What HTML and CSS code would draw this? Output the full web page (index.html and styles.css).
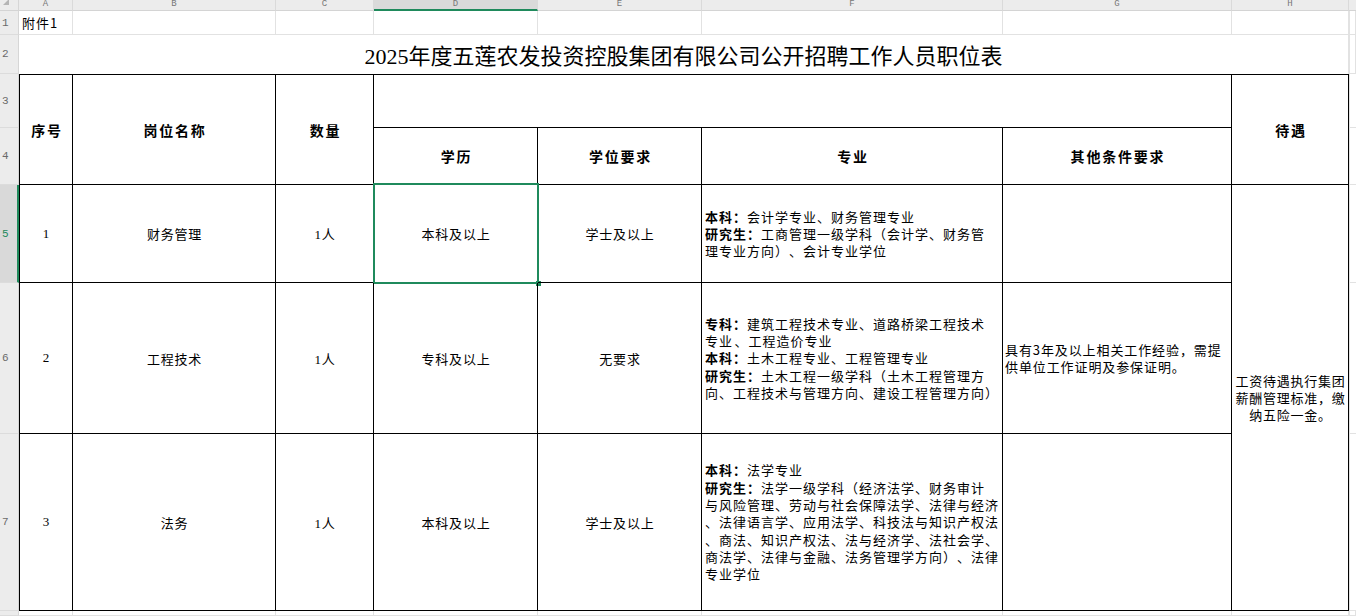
FILE: index.html
```html
<!DOCTYPE html>
<html lang="zh-CN">
<head>
<meta charset="utf-8">
<title>职位表</title>
<link rel="stylesheet" href="styles.css">
</head>
<body>
<div class="sheet">
  <!-- column headers -->
  <div class="corner"><svg class="tri" width="8" height="6" viewBox="0 0 8 6"><polygon points="8,0 8,6 2,6" fill="#b5b5b5"/></svg></div>
  <div class="ch"><span>A</span></div>
  <div class="ch"><span>B</span></div>
  <div class="ch"><span>C</span></div>
  <div class="ch ch-sel"><span>D</span></div>
  <div class="ch"><span>E</span></div>
  <div class="ch"><span>F</span></div>
  <div class="ch"><span>G</span></div>
  <div class="ch"><span>H</span></div>
  <div class="ch ch-last"></div>

  <!-- row 1 -->
  <div class="rh">1</div>
  <div class="g txt-left">附件1</div>
  <div class="g"></div>
  <div class="g"></div>
  <div class="g"></div>
  <div class="g"></div>
  <div class="g"></div>
  <div class="g"></div>
  <div class="g"></div>
  <div class="g gi"></div>

  <!-- row 2 -->
  <div class="rh">2</div>
  <div class="title span-c8">2025年度五莲农发投资控股集团有限公司公开招聘工作人员职位表</div>
  <div class="g gi"></div>

  <!-- row 3 -->
  <div class="rh">3</div>
  <div class="t top first hd span-r2">序号</div>
  <div class="t top hd span-r2">岗位名称</div>
  <div class="t top hd span-r2">数量</div>
  <div class="t top span-c4"></div>
  <div class="t top hd span-r2">待遇</div>
  <div class="gi"></div>

  <!-- row 4 -->
  <div class="rh">4</div>
  <div class="t hd">学历</div>
  <div class="t hd">学位要求</div>
  <div class="t hd">专业</div>
  <div class="t hd">其他条件要求</div>
  <div class="gi"></div>

  <!-- row 5 -->
  <div class="rh rh-sel">5</div>
  <div class="t first dt num">1</div>
  <div class="t dt">财务管理</div>
  <div class="t dt num">1人</div>
  <div class="t dt cell-sel">本科及以上<div class="sel"><div class="handle"></div></div></div>
  <div class="t dt">学士及以上</div>
  <div class="t dt para"><p><b>本科：</b>会计学专业、财务管理专业<br><b>研究生：</b>工商管理一级学科（会计学、财务管<br>理专业方向）、会计专业学位</p></div>
  <div class="t dt"></div>
  <div class="t dt span-r3"><p class="center-p">工资待遇执行集团<br>薪酬管理标准，缴<br>纳五险一金。</p></div>
  <div class="gi"></div>

  <!-- row 6 -->
  <div class="rh">6</div>
  <div class="t first dt num">2</div>
  <div class="t dt">工程技术</div>
  <div class="t dt num">1人</div>
  <div class="t dt">专科及以上</div>
  <div class="t dt">无要求</div>
  <div class="t dt para"><p><b>专科：</b>建筑工程技术专业、道路桥梁工程技术<br>专业<span class="thin"> </span>、工程造价专业<br><b>本科：</b>土木工程专业、工程管理专业<br><b>研究生：</b>土木工程一级学科（土木工程管理方<br>向、工程技术与管理方向、建设工程管理方向）</p></div>
  <div class="t dt para para-g"><p>具有3年及以上相关工作经验，需提<br>供单位工作证明及参保证明。</p></div>
  <div class="gi"></div>

  <!-- row 7 -->
  <div class="rh">7</div>
  <div class="t first dt num">3</div>
  <div class="t dt">法务</div>
  <div class="t dt num">1人</div>
  <div class="t dt">本科及以上</div>
  <div class="t dt">学士及以上</div>
  <div class="t dt para"><p><b>本科：</b>法学专业<br><b>研究生：</b>法学一级学科（经济法学、财务审计<br>与风险管理、劳动与社会保障法学、法律与经济<br>、法律语言学、应用法学、科技法与知识产权法<br>、商法、知识产权法、法与经济学、法社会学、<br>商法学、法律与金融、法务管理学方向）、法律<br>专业学位</p></div>
  <div class="t dt"></div>
  <div class="gi"></div>

  <!-- row 8 -->
  <div class="rh"></div>
  <div class="g"></div>
  <div class="g"></div>
  <div class="g"></div>
  <div class="g"></div>
  <div class="g"></div>
  <div class="g"></div>
  <div class="g"></div>
  <div class="g"></div>
  <div class="g gi"></div>
</div>
</body>
</html>
```

FILE: styles.css
```css
* { box-sizing: border-box; }

html, body {
  margin: 0;
  padding: 0;
  background: #fff;
}

body {
  font-family: "Noto Sans CJK SC", "Noto Sans", sans-serif;
  color: #000;
  text-spacing-trim: space-all;
}

.sheet {
  display: grid;
  grid-template-columns: 19px 54px 203px 98px 164px 164px 301px 229px 117px 1fr;
  grid-template-rows: 11px 24px 39px 54px 57px 98px 151px 177px 1fr;
  width: 1356px;
  height: 616px;
  overflow: hidden;
}

/* ---------- headers ---------- */
.corner {
  background: #ececec;
  border-right: 1px solid #d6d6d6;
  border-bottom: 1px solid #d4d4d4;
  display: flex;
  align-items: flex-start;
  padding-left: 1px;
}
.tri { display: block; margin-top: -1px; }

.ch {
  background: #ececec;
  border-right: 1px solid #dadada;
  border-bottom: 1px solid #d4d4d4;
  text-align: center;
}
.ch span {
  display: block;
  font-family: "Liberation Mono", "DejaVu Sans Mono", monospace;
  font-size: 9px;
  line-height: 9px;
  color: #777;
}
.ch-sel {
  background: #dadada;
  border-bottom: 2px solid #1f8a5c;
}
.ch-last { border-right: none; }

.rh {
  background: #ececec;
  border-right: 1px solid #d6d6d6;
  border-bottom: 1px solid #dcdcdc;
  font-family: "Liberation Mono", "DejaVu Sans Mono", monospace;
  font-size: 11px;
  color: #6a6a6a;
  display: flex;
  align-items: center;
  padding-left: 2px;
}
.rh-sel {
  background: #d9d9d9;
  color: #1f8a5c;
  border-right: 2px solid #1f8a5c;
}

/* ---------- grid cells ---------- */
.g {
  border-right: 1px solid #e2e2e2;
  border-bottom: 1px solid #e2e2e2;
}
.gi {
  border-left: 1px solid #e2e2e2;
  border-bottom: 1px solid #e2e2e2;
}
.txt-left {
  display: flex;
  align-items: center;
  padding-left: 3px;
  font-size: 13px;
  letter-spacing: 1px;
}

.title {
  border-right: 1px solid #e2e2e2;
  display: flex;
  align-items: center;
  justify-content: center;
  padding-top: 4px;
  font-family: "Liberation Serif", "Noto Sans CJK SC", serif;
  font-size: 22px;
  line-height: 26px;
  white-space: nowrap;
}

/* ---------- table ---------- */
.t {
  border-right: 1px solid #000;
  border-bottom: 1px solid #000;
  display: flex;
  align-items: center;
  justify-content: center;
  text-align: center;
  position: relative;
}
.top { border-top: 1px solid #000; }
.first { border-left: 1px solid #000; }

.hd {
  font-size: 14px;
  font-weight: bold;
  letter-spacing: 1.8px;
  padding-left: 2px;
}

.dt {
  font-size: 13px;
  letter-spacing: 0.8px;
  padding-left: 1px;
}
.num {
  font-family: "Liberation Serif", "Noto Sans CJK SC", serif;
  font-size: 13px;
}

.para {
  justify-content: flex-start;
  text-align: left;
  padding-left: 3px;
}
.para p,
.center-p {
  margin: 0;
  font-size: 13px;
  line-height: 17.3px;
  letter-spacing: 1px;
  white-space: nowrap;
}
.para b { font-weight: bold; }
.para-g { padding-left: 2px; }
.para-g p { letter-spacing: 0.9px; }
.thin { letter-spacing: 0; font-size: 6px; line-height: 0; }

.center-p {
  text-align: center;
  letter-spacing: 0.75px;
}

/* ---------- selection ---------- */
.sel {
  position: absolute;
  left: -1px;
  top: -2px;
  right: -2px;
  bottom: -2px;
  border: 2px solid #1f8a5c;
  pointer-events: none;
}
.handle {
  position: absolute;
  right: -4px;
  bottom: -4px;
  width: 5px;
  height: 5px;
  background: #1f8a5c;
}

/* ---------- spans ---------- */
.span-c8 { grid-column: span 8; }
.span-c4 { grid-column: span 4; }
.span-r2 { grid-row: span 2; }
.span-r3 { grid-row: span 3; }
```
